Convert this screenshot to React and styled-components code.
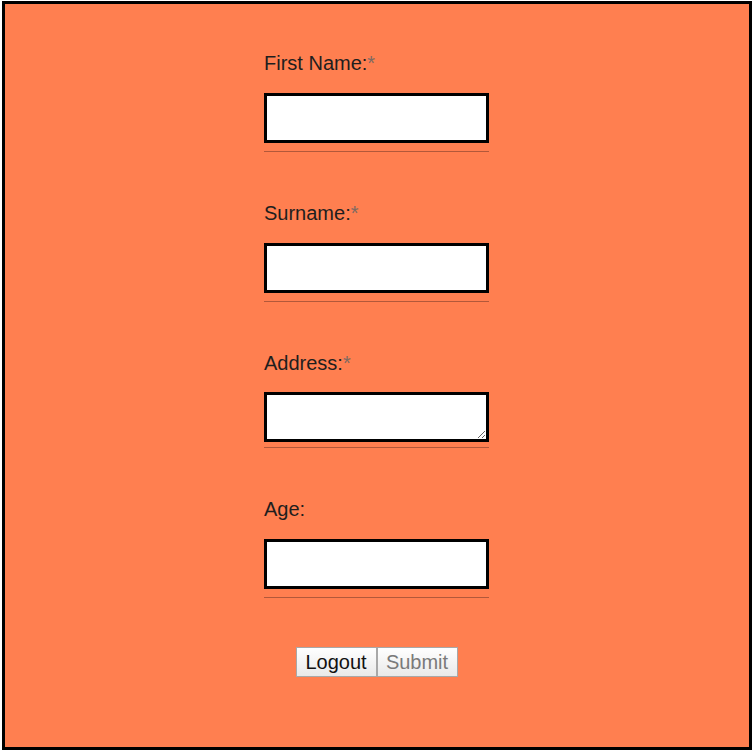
import React from "react";
import styled, { createGlobalStyle } from "styled-components";

const GlobalStyle = createGlobalStyle`
  html, body {
    margin: 0;
    padding: 0;
    background: #ffffff;
  }
  body {
    font-family: "Liberation Sans", Arial, sans-serif;
  }
`;

const Frame = styled.div`
  box-sizing: border-box;
  width: 750px;
  height: 749px;
  margin: 1px 0 0 2px;
  border: 3px solid #000;
  background: #ff7f50;
  padding: 48px 1px 0 0;
`;

const Form = styled.form`
  display: flex;
  flex-direction: column;
  align-items: center;
`;

const Field = styled.div`
  box-sizing: border-box;
  width: 225px;
  padding-bottom: ${(p) => (p.$area ? 5 : 8)}px;
  border-bottom: 1px solid #b2583a;
  margin-bottom: 50px;
`;

const Label = styled.label`
  display: block;
  height: 23px;
  font-size: 20px;
  line-height: 23px;
  color: #1e1e1e;
  margin-bottom: ${(p) => (p.$area ? 17 : 18)}px;
`;

const Required = styled.span`
  color: #7d6a62;
`;

const TextInput = styled.input`
  display: block;
  box-sizing: border-box;
  width: 225px;
  height: 50px;
  margin: 0;
  padding: 2px 6px;
  border: 3px solid #000;
  border-radius: 0;
  background: #fff;
  font-family: "Liberation Sans", Arial, sans-serif;
  font-size: 18px;
  outline: none;
`;

const TextArea = styled.textarea`
  display: block;
  box-sizing: border-box;
  width: 225px;
  height: 50px;
  margin: 0;
  padding: 2px 6px;
  border: 3px solid #000;
  border-radius: 0;
  background: #fff;
  font-family: "Liberation Sans", Arial, sans-serif;
  font-size: 18px;
  outline: none;
`;

const Actions = styled.div`
  display: flex;
  justify-content: center;
  margin-top: -1px;
`;

const Button = styled.button`
  box-sizing: border-box;
  width: 81px;
  height: 30px;
  margin: 0;
  padding: 1px 0 0;
  border: 1px solid #a8a8a8;
  border-radius: 0;
  background: linear-gradient(#ffffff, #e9e9e9);
  font-family: "Liberation Sans", Arial, sans-serif;
  font-size: 20px;
  line-height: 23px;
  text-align: center;
  color: ${(p) => (p.disabled ? "#7a7a7a" : "#111")};
  cursor: ${(p) => (p.disabled ? "default" : "pointer")};
`;

const fields = [
  { id: "first", label: "First Name:", required: true },
  { id: "surname", label: "Surname:", required: true },
  { id: "address", label: "Address:", required: true, area: true },
  { id: "age", label: "Age:", required: false },
];

export default function App() {
  return (
    <>
      <GlobalStyle />
      <Frame>
        <Form onSubmit={(e) => e.preventDefault()}>
          {fields.map((f) => (
            <Field key={f.id} $area={f.area}>
              <Label htmlFor={f.id} $area={f.area}>
                {f.label}
                {f.required && <Required>*</Required>}
              </Label>
              {f.area ? <TextArea id={f.id} /> : <TextInput id={f.id} type="text" />}
            </Field>
          ))}
          <Actions>
            <Button type="button">Logout</Button>
            <Button type="submit" disabled>
              Submit
            </Button>
          </Actions>
        </Form>
      </Frame>
    </>
  );
}
